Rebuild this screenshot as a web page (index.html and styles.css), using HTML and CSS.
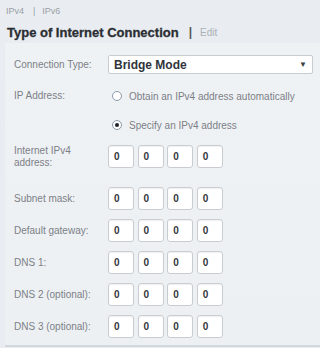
FILE: index.html
```html
<!DOCTYPE html>
<html>
<head>
<meta charset="utf-8">
<link rel="stylesheet" href="styles.css">
</head>
<body>
<div class="tabs"><span>IPv4</span><span class="sep">|</span><span>IPv6</span></div>
<div class="title"><span class="t">Type of Internet Connection</span><span class="bar">|</span><span class="edit">Edit</span></div>
<div class="panel">
  <div class="row r-select">
    <div class="label">Connection Type:</div>
    <div class="select"><span>Bridge Mode</span><span class="arrow">▼</span></div>
  </div>
  <div class="row r-radio1">
    <div class="label">IP Address:</div>
    <div class="radio-line"><span class="radio"></span><span class="rtext">Obtain an IPv4 address automatically</span></div>
  </div>
  <div class="row r-radio2">
    <div class="label"></div>
    <div class="radio-line"><span class="radio on"></span><span class="rtext">Specify an IPv4 address</span></div>
  </div>
  <div class="row r-ip first">
    <div class="label two">Internet IPv4<br>address:</div>
    <div class="octets"><span class="oct">0</span><span class="oct">0</span><span class="oct">0</span><span class="oct">0</span></div>
  </div>
  <div class="row r-ip second">
    <div class="label">Subnet mask:</div>
    <div class="octets"><span class="oct">0</span><span class="oct">0</span><span class="oct">0</span><span class="oct">0</span></div>
  </div>
  <div class="row r-ip">
    <div class="label">Default gateway:</div>
    <div class="octets"><span class="oct">0</span><span class="oct">0</span><span class="oct">0</span><span class="oct">0</span></div>
  </div>
  <div class="row r-ip">
    <div class="label">DNS 1:</div>
    <div class="octets"><span class="oct">0</span><span class="oct">0</span><span class="oct">0</span><span class="oct">0</span></div>
  </div>
  <div class="row r-ip">
    <div class="label">DNS 2 (optional):</div>
    <div class="octets"><span class="oct">0</span><span class="oct">0</span><span class="oct">0</span><span class="oct">0</span></div>
  </div>
  <div class="row r-ip">
    <div class="label">DNS 3 (optional):</div>
    <div class="octets"><span class="oct">0</span><span class="oct">0</span><span class="oct">0</span><span class="oct">0</span></div>
  </div>
</div>
</body>
</html>
```
FILE: styles.css
```css
html, body { margin: 0; padding: 0; }
body {
  width: 320px;
  height: 348px;
  background: #e9edf1;
  font-family: "Liberation Sans", Arial, sans-serif;
  color: #777;
  overflow: hidden;
}
.tabs {
  height: 22px;
  display: flex;
  align-items: center;
  padding-left: 6px;
  font-size: 9px;
  color: #9a9fa6;
}
.tabs .sep { margin: 0 7px 0 9px; }
.title {
  height: 20px;
  display: flex;
  align-items: center;
  padding-left: 7px;
}
.title .t { font-size: 13px; font-weight: bold; color: #2b2e33; -webkit-text-stroke: 0.3px #2b2e33; }
.title .bar { font-size: 12px; font-weight: bold; color: #555; margin: 0 8px 0 10px; }
.title .edit { font-size: 10px; color: #aab0b6; }
.panel {
  margin-top: 1px;
  margin-left: 5px;
  height: 304px;
  background: linear-gradient(#eff2f5, #edf0f3);
  border-bottom: 2px solid #d3d8dd;
  box-sizing: border-box;
  padding-top: 12px;
}
.row { display: flex; align-items: center; }
.label { width: 103px; padding-left: 9px; box-sizing: border-box; font-size: 10px; color: #7c8086; line-height: 12px; }
.r-select { height: 19px; }
.select {
  width: 205px;
  height: 19px;
  box-sizing: border-box;
  background: #fff;
  border: 1px solid #c7ccd1;
  border-radius: 2px;
  display: flex;
  align-items: center;
  justify-content: space-between;
  padding: 0 5px 0 5px;
  font-size: 12px;
  font-weight: bold;
  color: #30343a;
}
.select .arrow { font-size: 8px; color: #3b3f44; }
.r-radio1 { height: 20px; margin-top: 12px; }
.r-radio2 { height: 20px; margin-top: 9px; }
.radio-line { display: flex; align-items: center; padding-left: 4px; }
.radio {
  width: 10px;
  height: 10px;
  border-radius: 50%;
  border: 1px solid #8c9aa8;
  background: #fff;
  box-sizing: border-box;
  margin-right: 7px;
  position: relative;
}
.radio.on::after {
  content: "";
  position: absolute;
  left: 2px; top: 2px;
  width: 4px; height: 4px;
  border-radius: 50%;
  background: #1e2226;
}
.rtext { font-size: 10px; color: #7c8086; }
.r-ip { height: 23px; margin-top: 9px; }
.r-ip.first { margin-top: 10px; }
.r-ip.second { margin-top: 19px; }
.octets { display: flex; gap: 3.6px; }
.oct {
  width: 26px;
  height: 23px;
  box-sizing: border-box;
  background: #fff;
  border: 1px solid #c9cdd2;
  border-radius: 3px;
  box-shadow: inset 0 1px 1px rgba(0,0,0,0.06);
  font-size: 10px;
  font-weight: bold;
  color: #33373c;
  display: flex;
  align-items: center;
  padding-left: 5px;
}
```
